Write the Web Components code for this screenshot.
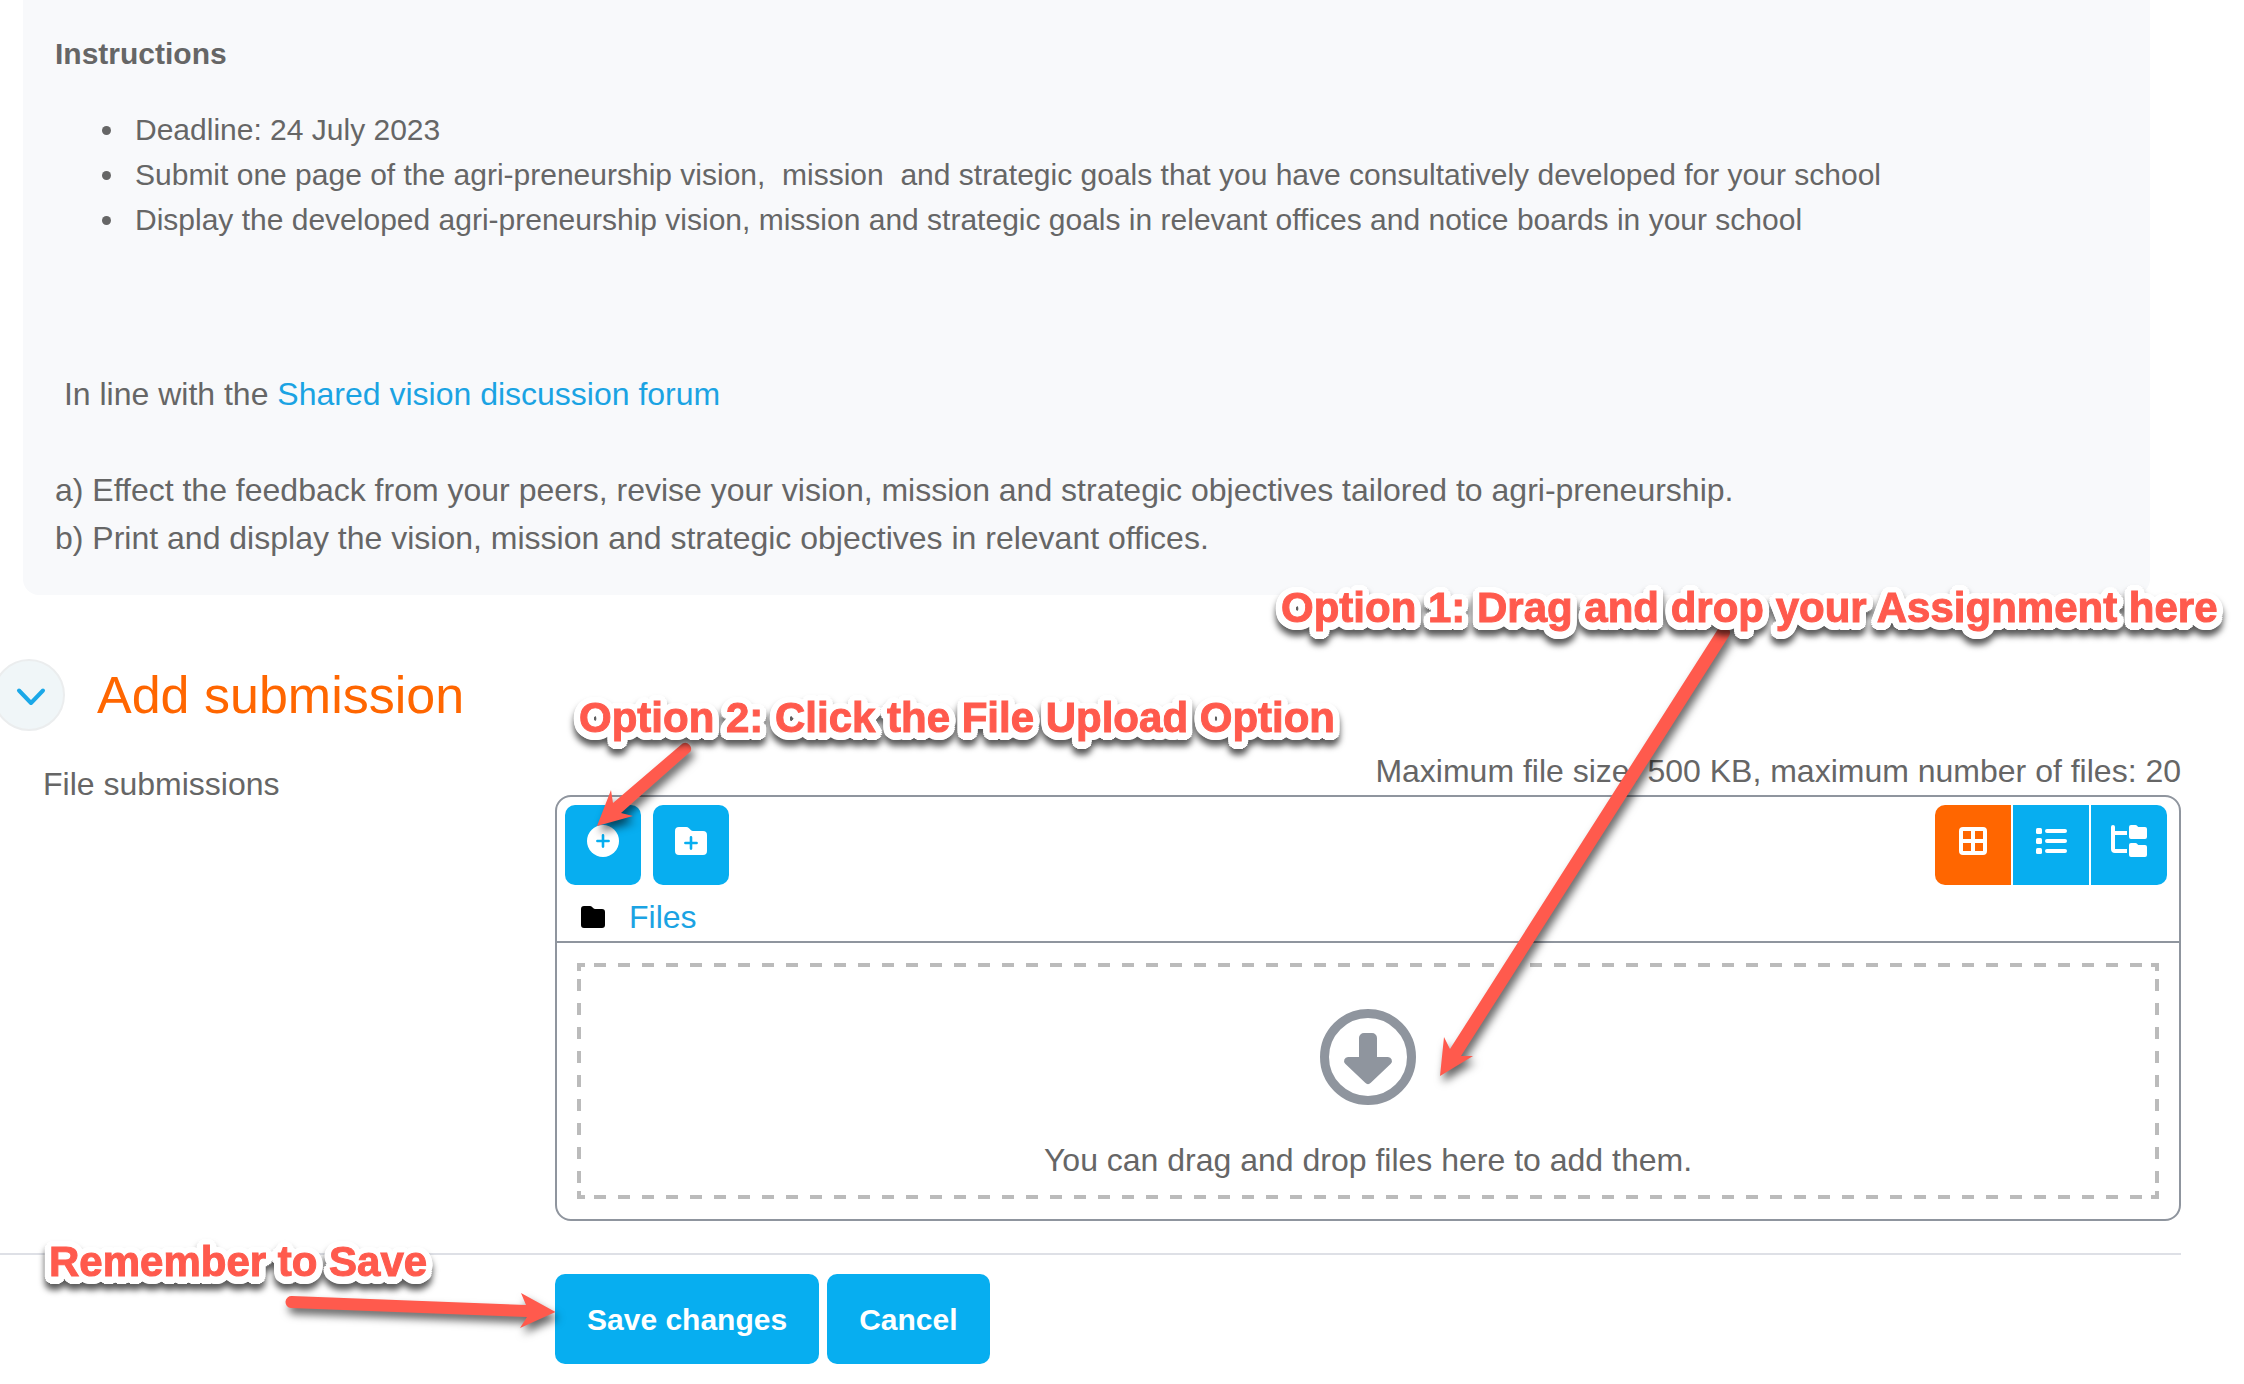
<!DOCTYPE html>
<html lang="en">
<head>
<meta charset="utf-8">
<title>Add submission</title>
<style>
  html { background: #fff; }
  body { margin: 0; font: 32px/48px "Liberation Sans", Arial, sans-serif; color: #666; }
  a { color: #1ba3e3; text-decoration: none; }
  p { margin: 0; }
  li { padding-left: 8px; }
</style>
</head>
<body>
<assignment-page>
  <instruction-panel heading="Instructions">
    <ul slot="tasks">
      <li>Deadline: 24 July 2023</li>
      <li>Submit one page of the agri-preneurship vision,&nbsp; mission&nbsp; and strategic goals that you have consultatively developed for your school</li>
      <li>Display the developed agri-preneurship vision, mission and strategic goals in relevant offices and notice boards in your school</li>
    </ul>
    <p>&nbsp;In line with the <a href="#forum">Shared vision discussion forum</a></p>
    <p><br>a) Effect the feedback from your peers, revise your vision, mission and strategic objectives tailored to agri-preneurship.<br>b) Print and display the vision, mission and strategic objectives in relevant offices.</p>
  </instruction-panel>
  <form-section heading="Add submission">
    <form-row label="File submissions">
      <file-manager></file-manager>
    </form-row>
  </form-section>
  <form-actions>
    <action-button>Save changes</action-button>
    <action-button>Cancel</action-button>
  </form-actions>
  <annotation-layer slot="overlay">
    <call-out style="left:1281px; top:584px">Option 1: Drag and drop your Assignment here</call-out>
    <call-out style="left:579px; top:694px">Option 2: Click the File Upload Option</call-out>
    <call-out style="left:49px; top:1238px">Remember to Save</call-out>
  </annotation-layer>
</assignment-page>

<script>
const BLUE = '#07aef0';

function define(name, html, setup) {
  const template = document.createElement('template');
  template.innerHTML = html;
  customElements.define(name, class extends HTMLElement {
    constructor() {
      super();
      this.attachShadow({ mode: 'open' }).append(template.content.cloneNode(true));
    }
    connectedCallback() {
      if (setup) setup(this, this.shadowRoot);
    }
  });
}

define('assignment-page', `
  <style>
    :host { display: block; position: relative; padding-bottom: 20px; overflow: hidden; }
  </style>
  <main><slot></slot></main>
  <slot name="overlay"></slot>
`);

define('instruction-panel', `
  <style>
    :host { display: block; margin: 0 94px 0 23px; padding: 31px 32px 33px; background: #f8f9fb; border-radius: 0 0 16px 16px; }
    h2 { margin: 0 0 31px; font-size: 30px; line-height: 45px; font-weight: bold; }
    ::slotted(ul) { padding-left: 72px; margin: 0 0 128px; font-size: 30px; line-height: 45px; }
  </style>
  <h2></h2>
  <slot name="tasks"></slot>
  <slot></slot>
`, (el, root) => { root.querySelector('h2').textContent = el.getAttribute('heading'); });

define('form-section', `
  <style>
    :host { display: block; margin: 64px 63px 0 0; }
    header { display: flex; align-items: center; gap: 32px; margin: 0 0 16px -7px; }
    button { display: grid; place-items: center; width: 72px; height: 72px; padding: 4px 0 0 4px; box-sizing: border-box; border: 2px solid #ebedee; border-radius: 50%; background: #f0f6f8; color: #1ba8e8; }
    h3 { margin: 0; font-size: 52px; line-height: 72px; font-weight: normal; color: #ff6600; }
  </style>
  <header>
    <button type="button" aria-label="Collapse section" aria-expanded="true">
      <svg width="30" height="20" viewBox="0 0 30 20" fill="none" stroke="currentColor" stroke-width="4" stroke-linecap="round" stroke-linejoin="round"><path d="M3 3.5 15 16 27 3.5"/></svg>
    </button>
    <h3></h3>
  </header>
  <slot></slot>
`, (el, root) => { root.querySelector('h3').textContent = el.getAttribute('heading'); });

define('form-row', `
  <style>
    :host { display: grid; grid-template-columns: 555px minmax(0, 1fr); }
    .label { padding: 13px 0 0 43px; }
  </style>
  <div class="label"></div>
  <slot></slot>
`, (el, root) => { root.querySelector('.label').textContent = el.getAttribute('label'); });

const ICONS = {
  plus: ['0 0 32 32', '<circle cx="16" cy="16" r="16" fill="#fff"/><path d="M16 10.4v11.200M10.400 16h11.200" stroke="' + BLUE + '" stroke-width="2.600" stroke-linecap="round"/>'],
  folderPlus: ['0 0 32 32', '<path d="M4 2h7.200a4 4 0 0 1 2.800 1.200l2 2a3 3 0 0 0 2 .8h10a4 4 0 0 1 4 4v16a4 4 0 0 1-4 4H4a4 4 0 0 1-4-4V6a4 4 0 0 1 4-4z" fill="#fff"/><path d="M16 12.400v11.200M10.400 18h11.200" stroke="' + BLUE + '" stroke-width="2.600" stroke-linecap="round"/>'],
  grid: ['0 0 28 28', '<path fill="#fff" fill-rule="evenodd" d="M4 0h20a4 4 0 0 1 4 4v20a4 4 0 0 1-4 4H4a4 4 0 0 1-4-4V4a4 4 0 0 1 4-4zM4 4v8h8V4zM16 4v8h8V4zM4 16v8h8v-8zM16 16v8h8v-8z"/>'],
  list: ['0 0 32 28', '<g fill="#fff"><rect x="1" y="1" width="6" height="6" rx="1.500"/><rect x="1" y="11" width="6" height="6" rx="1.500"/><rect x="1" y="21" width="6" height="6" rx="1.500"/><rect x="10" y="2" width="22" height="4" rx="2"/><rect x="10" y="12" width="22" height="4" rx="2"/><rect x="10" y="22" width="22" height="4" rx="2"/></g>'],
  tree: ['0 0 36 32', '<path d="M2 2v22a2 2 0 0 0 2 2h12M2 8h14" fill="none" stroke="#fff" stroke-width="4"/><circle cx="2" cy="2" r="2" fill="#fff"/><path fill="#fff" d="M20 0h4.500a2 2 0 0 1 1.400.6l.8.800a2 2 0 0 0 1.400.6H34a2 2 0 0 1 2 2v8a2 2 0 0 1-2 2H20a2 2 0 0 1-2-2V2a2 2 0 0 1 2-2zM20 18h4.500a2 2 0 0 1 1.400.6l.8.800a2 2 0 0 0 1.400.6H34a2 2 0 0 1 2 2v8a2 2 0 0 1-2 2H20a2 2 0 0 1-2-2V20a2 2 0 0 1 2-2z"/>']
};

define('icon-button', `
  <style>
    :host { display: block; }
    button { display: flex; align-items: center; justify-content: center; width: 76px; height: 80px; padding: 0 0 8px; border: 0; border-radius: var(--corners, 10px); background: ${BLUE}; }
    :host([active]) button { background: #ff6600; }
  </style>
  <button type="button"><svg></svg></button>
`, (el, root) => {
  const [box, shapes] = ICONS[el.getAttribute('icon')];
  const svg = root.querySelector('svg');
  const [, , w, h] = box.split(' ');
  svg.setAttribute('viewBox', box);
  svg.setAttribute('width', w);
  svg.setAttribute('height', h);
  svg.innerHTML = shapes;
  root.querySelector('button').setAttribute('aria-label', el.getAttribute('label'));
});

define('file-manager', `
  <style>
    :host { display: block; }
    .limits { text-align: right; }
    .box { border: 2px solid #8f959e; border-radius: 16px; }
    .bar { display: flex; justify-content: space-between; padding: 8px 12px 8px 8px; }
    .tools { display: flex; gap: 12px; }
    .views { display: flex; gap: 2px; }
    .views :first-child { --corners: 10px 0 0 10px; }
    .views :nth-child(2) { --corners: 0; }
    .views :last-child { --corners: 0 10px 10px 0; }
    .path { display: flex; align-items: center; gap: 24px; padding-left: 24px; border-bottom: 2px solid #8f959e; }
    a { color: #1ba3e3; text-decoration: none; }
  </style>
  <div class="limits">Maximum file size: 500 KB, maximum number of files: 20</div>
  <div class="box">
    <div class="bar">
      <div class="tools">
        <icon-button icon="plus" label="Add"></icon-button>
        <icon-button icon="folderPlus" label="Create folder"></icon-button>
      </div>
      <div class="views">
        <icon-button icon="grid" label="Icons" active></icon-button>
        <icon-button icon="list" label="List"></icon-button>
        <icon-button icon="tree" label="Tree"></icon-button>
      </div>
    </div>
    <nav class="path">
      <svg width="24" height="22" viewBox="0 0 24 22"><path d="M3 0h6a3 3 0 0 1 2.100.9l1 1.200a3 3 0 0 0 2.100.9H21a3 3 0 0 1 3 3v13a3 3 0 0 1-3 3H3a3 3 0 0 1-3-3V3a3 3 0 0 1 3-3z"/></svg>
      <a href="#files">Files</a>
    </nav>
    <drop-zone>You can drag and drop files here to add them.</drop-zone>
  </div>
`);

define('drop-zone', `
  <style>
    :host {
      --ink: #bbb;
      --row: linear-gradient(90deg, transparent 6px, var(--ink) 6px 18px, transparent 18px);
      --col: linear-gradient(transparent 6px, var(--ink) 6px 18px, transparent 18px);
      --solid: linear-gradient(var(--ink), var(--ink));
      display: flex; flex-direction: column; align-items: center; gap: 31px;
      margin: 20px; padding: 46px 0 15px; text-align: center;
      background:
        var(--row) center top / 24px 4px repeat-x,
        var(--row) center bottom / 24px 4px repeat-x,
        var(--col) left center / 4px 24px repeat-y,
        var(--col) right center / 4px 24px repeat-y,
        var(--solid) left top / 8px 4px no-repeat, var(--solid) left top / 4px 8px no-repeat,
        var(--solid) right top / 8px 4px no-repeat, var(--solid) right top / 4px 8px no-repeat,
        var(--solid) left bottom / 8px 4px no-repeat, var(--solid) left bottom / 4px 8px no-repeat,
        var(--solid) right bottom / 8px 4px no-repeat, var(--solid) right bottom / 4px 8px no-repeat;
    }
    svg { display: block; }
  </style>
  <svg width="96" height="96" viewBox="0 0 96 96">
    <circle cx="48" cy="48" r="43.5" fill="none" stroke="#8f959e" stroke-width="9"/>
    <path fill="#8f959e" d="M44 24h8a5 5 0 0 1 5 5v19h11a4 4 0 0 1 2.800 6.800L50.800 73.800a4 4 0 0 1-5.600 0L25.200 54.800A4 4 0 0 1 28 48h11V29a5 5 0 0 1 5-5z"/>
  </svg>
  <div><slot></slot></div>
`);

define('form-actions', `
  <style>
    :host { display: flex; gap: 8px; margin: 32px 63px 0 0; padding: 19px 0 0 555px; border-top: 2px solid #dee0e6; }
  </style>
  <slot></slot>
`);

define('action-button', `
  <style>
    :host { display: block; }
    button { height: 90px; padding: 0 32px; border: 0; border-radius: 10px; background: ${BLUE}; color: #fff; font: bold 30px/45px "Liberation Sans", Arial, sans-serif; }
  </style>
  <button type="button"><slot></slot></button>
`);

define('annotation-layer', `
  <style>
    :host { position: absolute; inset: 0; pointer-events: none; }
    svg { position: absolute; left: 0; top: 0; width: 2244px; height: 1384px; fill: #ff5a4d; }
    g { filter: drop-shadow(3px 6px 4px rgba(0, 0, 0, .6)); }
  </style>
  <svg viewBox="0 0 2244 1384" aria-hidden="true">
    <g><path d="M1440 1076 1444 1037 1450 1049 1718 629A6 6 0 0 1 1729 636L1461 1056 1473 1056Z"/></g>
    <g><path d="M597 826 611 790 613 803 682.500 743.500A6 6 0 0 1 690.500 751.500L621 813 633 816Z"/></g>
    <g><path d="M555.500 1312 521 1293 526 1305 292 1296A6 6 0 0 0 291 1308L527 1317 520 1328Z"/></g>
  </svg>
  <slot></slot>
`);

const halo = [7, 4].flatMap(r => Array.from({ length: 24 }, (_, i) => {
  const t = i * Math.PI / 12;
  return `${(r * Math.cos(t)).toFixed(1)}px ${(r * Math.sin(t) + 1).toFixed(1)}px 0 #fff`;
})).join(',');

define('call-out', `
  <style>
    :host { position: absolute; white-space: nowrap; font-size: 42px; line-height: 48px; font-weight: bold; color: #ff5a4d; text-shadow: ${halo}; -webkit-text-stroke: 1px #ff5a4d; filter: drop-shadow(0 6px 3px rgba(0, 0, 0, .65)); }
  </style>
  <slot></slot>
`);
</script>
</body>
</html>
